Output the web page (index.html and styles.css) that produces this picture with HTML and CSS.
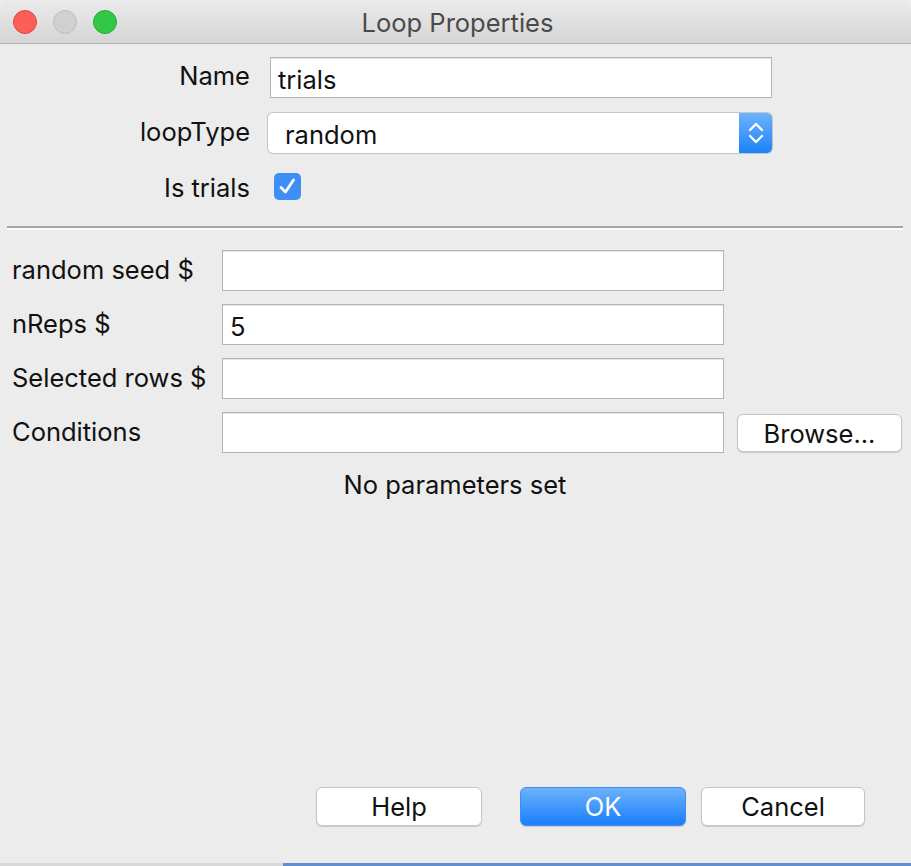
FILE: index.html
```html
<!DOCTYPE html>
<html>
<head>
<meta charset="utf-8">
<link rel="stylesheet" href="styles.css">
</head>
<body>
<div class="window">
  <div class="titlebar">
    <div class="lights">
      <span class="light red"></span>
      <span class="light gray"></span>
      <span class="light green"></span>
    </div>
    <div class="title">Loop Properties</div>
  </div>
  <div class="content">
    <div class="top-form">
      <label class="tlabel">Name</label>
      <div class="textbox name-box">trials</div>
      <label class="tlabel">loopType</label>
      <div class="select">
        <div class="select-text">random</div>
        <div class="stepper">
          <svg width="20" height="26" viewBox="0 0 20 26">
            <path d="M4 10 L10 4 L16 10" fill="none" stroke="#fff" stroke-width="2.4" stroke-linecap="round" stroke-linejoin="round"/>
            <path d="M4 16 L10 22 L16 16" fill="none" stroke="#fff" stroke-width="2.4" stroke-linecap="round" stroke-linejoin="round"/>
          </svg>
        </div>
      </div>
      <label class="tlabel trials-label">Is trials</label>
      <div class="check-cell">
        <span class="checkbox">
          <svg width="27" height="27" viewBox="0 0 27 27">
            <path d="M7 14.5 L11.5 19 L19.5 7" fill="none" stroke="#fff" stroke-width="2.8" stroke-linecap="round" stroke-linejoin="round"/>
          </svg>
        </span>
      </div>
    </div>
    <div class="separator"></div>
    <div class="params">
      <div class="prow">
        <label class="plabel">random seed $</label>
        <div class="textbox pbox"></div>
      </div>
      <div class="prow">
        <label class="plabel">nReps $</label>
        <div class="textbox pbox">5</div>
      </div>
      <div class="prow">
        <label class="plabel">Selected rows $</label>
        <div class="textbox pbox"></div>
      </div>
      <div class="prow">
        <label class="plabel">Conditions</label>
        <div class="textbox pbox"></div>
        <button class="btn browse">Browse...</button>
      </div>
    </div>
    <div class="noparams">No parameters set</div>
  </div>
  <div class="footer">
    <button class="btn help">Help</button>
    <button class="btn ok">OK</button>
    <button class="btn cancel">Cancel</button>
  </div>
</div>
<div class="desk">
  <div class="desk-left"></div>
  <div class="desk-right"></div>
</div>
</body>
</html>
```
FILE: styles.css
```css
html, body {
  margin: 0;
  padding: 0;
  background: #ececec;
}
body {
  width: 911px;
  height: 866px;
  overflow: hidden;
  font-family: Inter, "Liberation Sans", sans-serif;
  font-size: 25.5px;
  color: #111;
}
.window {
  height: 863px;
  display: flex;
  flex-direction: column;
  background: #ececec;
  border-radius: 10px 10px 6px 6px;
  overflow: hidden;
}
.titlebar {
  height: 43px;
  flex: 0 0 43px;
  position: relative;
  background: linear-gradient(#ebebeb, #d5d5d5);
  border-bottom: 1px solid #b1b1b1;
  display: flex;
  align-items: center;
  justify-content: center;
}
.lights {
  position: absolute;
  left: 13px;
  top: 10px;
  display: flex;
  gap: 16px;
}
.light {
  width: 24px;
  height: 24px;
  border-radius: 50%;
  box-sizing: border-box;
}
.light.red { background: #fc5f57; border: 1px solid #e2463f; }
.light.gray { background: #d0d0d0; border: 1px solid #bdbdbd; }
.light.green { background: #33c748; border: 1px solid #27aa35; }
.title {
  font-size: 25.5px;
  color: #4a4a4a;
  margin-top: 1px;
  margin-left: 4px;
}
.content {
  flex: 1;
  display: flex;
  flex-direction: column;
}
.top-form {
  display: grid;
  grid-template-columns: 250px 504px;
  grid-template-rows: 41px 40px 32px;
  column-gap: 18px;
  row-gap: 15px;
  padding-top: 13px;
  align-items: center;
}
.tlabel {
  text-align: right;
  margin-top: -4px;
}
.trials-label {
  margin-top: 6px;
}
.textbox {
  box-sizing: border-box;
  background: #fff;
  border: 1px solid #b4b4b4;
  box-shadow: inset 0 1px 0 #e6e6e6;
  height: 41px;
  display: flex;
  align-items: center;
  padding-left: 7px;
  padding-top: 4px;
}
.name-box {
  margin-left: 2px;
  width: 502px;
}
.select {
  height: 40px;
  width: 504px;
  box-sizing: border-box;
  display: flex;
  border-radius: 5px;
  background: #fff;
  box-shadow: 0 0 0 1px #c6c6c6, 0 1px 1px rgba(0,0,0,0.12);
  overflow: hidden;
}
.select-text {
  flex: 1;
  padding-left: 17px;
  padding-top: 2px;
  display: flex;
  align-items: center;
}
.stepper {
  width: 33px;
  background: linear-gradient(#6db3fb, #1a82fb);
  display: flex;
  align-items: center;
  justify-content: center;
}
.stepper svg { display: block; }
.check-cell {
  align-self: end;
  height: 27px;
  display: flex;
  align-items: center;
  padding-left: 6px;
}
.checkbox {
  width: 27px;
  height: 27px;
  border-radius: 5px;
  background: #3d8ef7;
  display: block;
}
.checkbox svg { display: block; }
.separator {
  margin: 26px 8px 0 7px;
  border-top: 2px solid #a4a4a4;
  background: #fafafa;
  box-sizing: border-box;
  height: 4px;
}
.params {
  display: flex;
  flex-direction: column;
  gap: 13px;
  padding-top: 20px;
}
.prow {
  display: flex;
  align-items: center;
  height: 41px;
}
.plabel {
  width: 222px;
  padding-left: 12px;
  box-sizing: border-box;
  margin-top: -3px;
}
.pbox {
  width: 502px;
}
.btn {
  font-family: Inter, "Liberation Sans", sans-serif;
  font-size: 25.5px;
  color: #111;
  background: #fff;
  border: 1px solid #c5c5c5;
  border-radius: 6px;
  box-shadow: 0 1px 1px rgba(0,0,0,0.15);
  height: 39px;
  padding: 0;
  margin: 0;
}
.browse {
  width: 165px;
  margin-left: 13px;
  height: 38px;
  padding-top: 1px;
}
.noparams {
  text-align: center;
  padding-top: 16px;
  padding-right: 1px;
}
.footer {
  display: flex;
  justify-content: flex-end;
  padding: 0 46px 37px 0;
  gap: 15px;
}
.help { width: 166px; margin-right: 23px; }
.ok {
  width: 166px;
  color: #fff;
  background: linear-gradient(#6cb2fb, #1a7ffb);
  border-color: #3f8ef5;
}
.cancel { width: 164px; }
.desk {
  height: 3px;
  display: flex;
  background: #ececec;
}
.desk-left {
  width: 283px;
  background: #d9d9d9;
}
.desk-right {
  flex: 1;
  background: #5f8fcc;
}
```
